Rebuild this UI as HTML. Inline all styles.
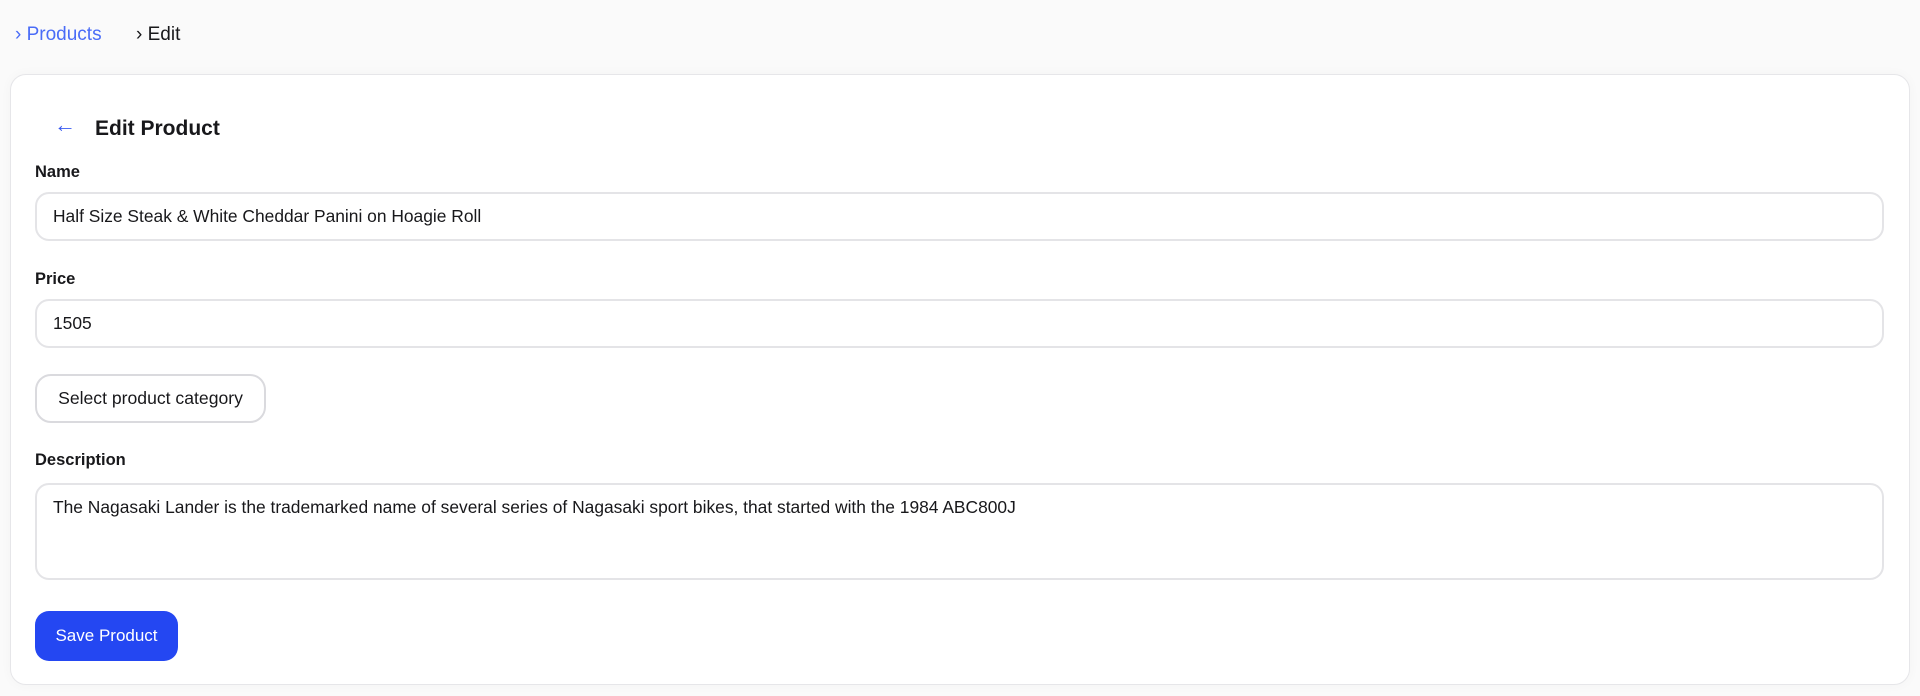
<!DOCTYPE html>
<html><head><meta charset="utf-8"><style>
*{box-sizing:border-box;margin:0;padding:0}
body{width:1920px;height:696px;background:#fafafa;font-family:"Liberation Sans",sans-serif;color:#18181b;position:relative;overflow:hidden}
.bc{position:absolute;top:22px;font-size:19px;line-height:26px}
.card{position:absolute;left:10px;top:74px;width:1900px;height:611px;background:#fff;border:1px solid #e6e6e9;border-radius:16px;box-shadow:0 0 12px rgba(0,0,0,.03)}
.abs{position:absolute}
.lbl{position:absolute;left:35px;font-weight:bold;font-size:16.5px}
.inp{position:absolute;left:35px;width:1849px;border:2px solid #e4e4e7;border-radius:14px;font-size:17.4px;padding-left:16px}
</style></head><body>
<div class="bc" style="left:15px;color:#4a6cf7">›&nbsp;Products</div>
<div class="bc" style="left:136px;color:#18181b">›&nbsp;Edit</div>
<div class="card"></div>
<div class="abs" style="left:54px;top:112px;font-size:22px;color:#3b5bf0">←</div>
<div class="abs" style="left:95px;top:117px;font-size:21px;font-weight:bold">Edit Product</div>
<div class="lbl" style="top:163px">Name</div>
<div class="inp" style="top:192px;height:49px;line-height:45px">Half Size Steak &amp; White Cheddar Panini on Hoagie Roll</div>
<div class="lbl" style="top:270px">Price</div>
<div class="inp" style="top:299px;height:49px;line-height:45px">1505</div>
<div class="abs" style="left:35px;top:374px;width:231px;height:49px;border:2px solid #dadade;border-radius:16px;font-size:17.6px;line-height:45px;text-align:center">Select product category</div>
<div class="lbl" style="top:451px">Description</div>
<div class="inp" style="top:483px;height:97px;padding-top:11px;line-height:22px">The Nagasaki Lander is the trademarked name of several series of Nagasaki sport bikes, that started with the 1984 ABC800J</div>
<div class="abs" style="left:35px;top:611px;width:143px;height:50px;background:#2447f2;border-radius:14px;color:#fff;font-size:17px;line-height:50px;text-align:center">Save Product</div>
</body></html>
